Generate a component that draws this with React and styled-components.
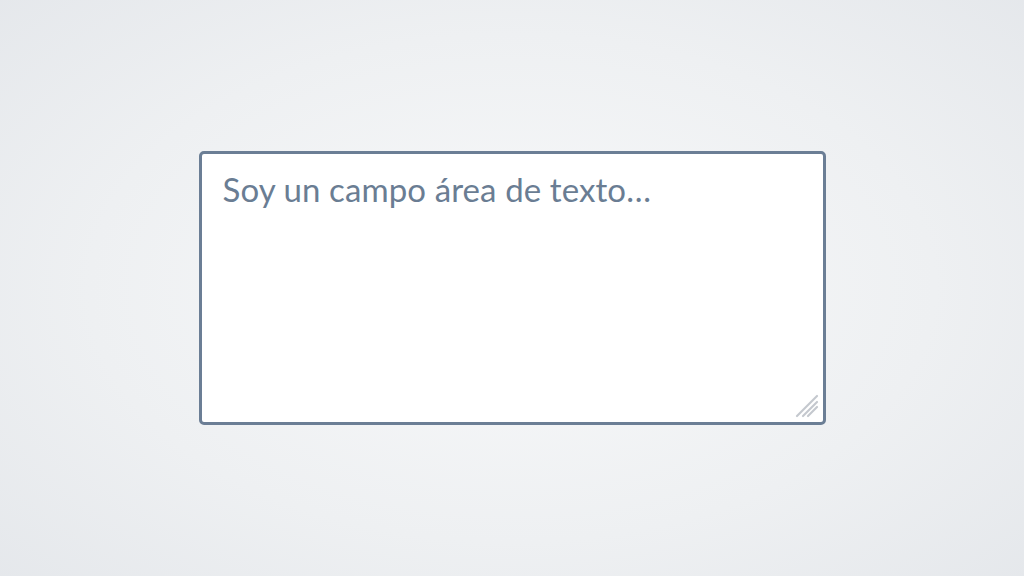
import React from 'react';
import styled, { createGlobalStyle } from 'styled-components';

const GlobalStyle = createGlobalStyle`
  html, body {
    margin: 0;
    padding: 0;
    height: 100%;
  }
  #root {
    height: 100%;
  }
`;

const Page = styled.div`
  width: 100%;
  height: 100%;
  display: flex;
  align-items: center;
  justify-content: center;
  background: radial-gradient(ellipse 75% 80% at 50% 50%, #f8f9fa 0%, #eef0f2 55%, #e3e6ea 100%);
  font-family: 'Lato', 'Open Sans', sans-serif;
`;

const Field = styled.div`
  position: relative;
  width: 627px;
  height: 274px;
  box-sizing: border-box;
  border: 3px solid #6b7e95;
  border-radius: 5px;
  background: #fff;
`;

const TextArea = styled.textarea`
  display: block;
  width: 100%;
  height: 100%;
  box-sizing: border-box;
  margin: 0;
  padding: 15px 21px;
  border: none;
  outline: none;
  resize: none;
  background: transparent;
  font-family: 'Lato', sans-serif;
  font-size: 33px;
  line-height: 40px;
  letter-spacing: 0.1px;
  color: #6a7d93;

  &::placeholder {
    color: #6a7d93;
    opacity: 1;
  }
`;

const Grip = styled.svg`
  position: absolute;
  right: 4px;
  bottom: 4px;
  width: 24px;
  height: 24px;
  pointer-events: none;
`;

export default function App() {
  return (
    <>
      <GlobalStyle />
      <Page>
        <Field>
          <TextArea placeholder="Soy un campo área de texto…" />
          <Grip viewBox="0 0 24 24">
            <g stroke="#c4c8ce" strokeWidth="2.2" strokeLinecap="round">
              <line x1="2" y1="22" x2="22" y2="2" />
              <line x1="8" y1="22" x2="22" y2="8" />
              <line x1="13" y1="22" x2="22" y2="13" />
            </g>
          </Grip>
        </Field>
      </Page>
    </>
  );
}
